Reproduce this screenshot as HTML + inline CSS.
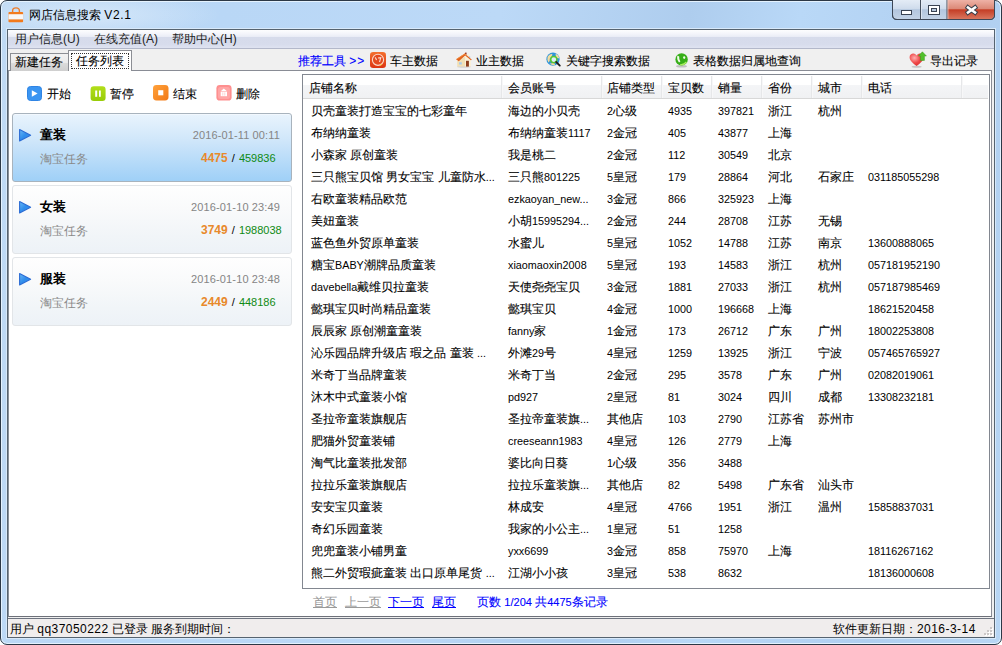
<!DOCTYPE html>
<html><head><meta charset="utf-8">
<style>
*{margin:0;padding:0;box-sizing:border-box}
html,body{width:1002px;height:645px;overflow:hidden;background:#fff}
body{font-family:"Liberation Sans",sans-serif;font-size:12px;color:#000;position:relative}
.a{position:absolute;white-space:nowrap}
#frame{left:0;top:0;width:1002px;height:645px;border:1px solid #2c3846;border-radius:7px;
 background:linear-gradient(100deg,#c0daf4 0%,#b9d7f6 20%,#bcd9f7 45%,#aecdee 62%,#b9d8f7 72%,#b0cff0 88%,#b8d6f4 100%);box-shadow:inset 0 0 0 1px #e4f2fe}
#client{left:7px;top:29px;width:988px;height:609px;background:#f0f0f0;border:1px solid #56636f;box-shadow:0 0 0 1px #d8e9fa}
#menubar{left:8px;top:30px;width:986px;height:19px;background:linear-gradient(180deg,#fdfdfe 0%,#f4f5fb 20%,#e9ecf6 38%,#d6dbeb 41%,#d7dcec 80%,#dfe3f1 100%);border-bottom:1px solid #b3b8ca}
.menu{top:31px;font-size:12px;line-height:16px;color:#1e1e1e}
#toolbar{left:8px;top:49px;width:986px;height:21px;background:#f0f0f0}
#panel{left:8px;top:70px;width:984px;height:547px;background:#fff;border-top:1px solid #898c95;border-left:1px solid #8a9098;border-right:1px solid #898c95;border-bottom:1px solid #6d7079}
#status{left:8px;top:618px;width:986px;height:19px;border-top:1px solid #6e7480;background:#f0eded}
.tb{top:53px;font-size:12px;line-height:16px;-webkit-text-stroke:0.1px currentColor}
.blue{color:#0000ff}
.card{left:12px;width:280px;height:69px;border-radius:3px}
.card1{background:linear-gradient(180deg,#e9f4fd 0%,#cfe6fa 40%,#9fd0f7 100%);border:1px solid #a8b3bd;box-shadow:inset 0 1px 0 #f2f8fe}
.card2{background:linear-gradient(180deg,#fefefe 0%,#f9fafb 35%,#f1f5f8 75%,#edf2f7 100%);border:1px solid #e2e5e8}
.tri{left:19px;width:0;height:0;border-top:6px solid transparent;border-bottom:6px solid transparent;border-left:12px solid #3d8fe0}
.ctitle{left:40px;font-weight:bold;font-size:13px;line-height:16px}
.csub{left:40px;top:0;color:#888;font-size:12px;line-height:16px;margin-top:1px}
.cdate{right:722px;color:#858585;font-size:11px;line-height:14px;letter-spacing:0.13px}
.ccount{left:201px;font-size:11px;line-height:14px;word-spacing:1px}
.or{color:#e8892b;font-weight:bold;font-size:12px}
.gr{color:#0f8a12}
#table{left:302px;top:74px;width:688px;height:515px;border:1px solid #828790;background:#fff}
.hdr{left:303px;top:75px;width:685px;height:24px;background:linear-gradient(180deg,#fff 0%,#fff 43.5%,#f4f5f7 44%,#f0f1f3 100%);border-bottom:1px solid #d8d8d8}
.hs{top:76px;width:1px;height:22px;background:#e6e7e9;box-shadow:1px 0 0 #f7f7f8}
.ht{top:81px;line-height:14px;font-size:12px;-webkit-text-stroke:0.1px #000}
#rows span{position:absolute;line-height:22px;font-size:12px;white-space:nowrap;-webkit-text-stroke:0.1px #000}
#rows i{font-style:normal;font-size:10.8px;-webkit-text-stroke:0}
.pg{top:594px;font-size:12px;line-height:16px;-webkit-text-stroke:0.1px currentColor}
.u{text-decoration:underline}
.ss{-webkit-text-stroke:0.1px currentColor}
.ls{font-style:normal;letter-spacing:0.45px}
.gry{color:#9a9a9a}
</style></head><body>
<div id="frame" class="a"></div>
<div class="a" style="left:1px;top:1px;width:260px;height:28px;background:radial-gradient(ellipse 130px 22px at 90px 14px,rgba(240,248,255,0.45),rgba(240,248,255,0))"></div>
<div id="client" class="a"></div>
<!-- title icon -->
<svg class="a" style="left:8px;top:7px" width="16" height="16" viewBox="0 0 16 16">
 <path d="M4.6 5.5 V3.8 Q4.6 0.9 8 0.9 Q11.4 0.9 11.4 3.8 V5.5" fill="none" stroke="#ee7d2a" stroke-width="1.4"/>
 <rect x="0.5" y="5" width="14.6" height="10.2" rx="0.8" fill="#f27a1c"/>
 <rect x="0.5" y="7.2" width="14.6" height="5.2" fill="#f8f6f4"/>
</svg>
<div class="a" style="left:29px;top:7px;font-size:12px;line-height:16px">网店信息搜索 <span style="letter-spacing:0.6px">V2.1</span></div>
<!-- window buttons -->
<svg class="a" style="left:892px;top:0" width="103" height="21" viewBox="0 0 103 21">
 <defs>
  <linearGradient id="gb" x1="0" y1="0" x2="0" y2="1"><stop offset="0" stop-color="#e4ecf6"/><stop offset="0.45" stop-color="#cfdcec"/><stop offset="0.5" stop-color="#b3c6de"/><stop offset="1" stop-color="#c3d3e6"/></linearGradient>
  <linearGradient id="gr" x1="0" y1="0" x2="0" y2="1"><stop offset="0" stop-color="#eeb2a6"/><stop offset="0.45" stop-color="#dc8a78"/><stop offset="0.52" stop-color="#c43e26"/><stop offset="1" stop-color="#d9765e"/></linearGradient>
 </defs>
 <path d="M0.5 0 V15 Q0.5 19.5 5 19.5 H98 Q102.5 19.5 102.5 15 V0" fill="url(#gb)" stroke="#3d4756" stroke-width="1"/>
 <path d="M55.5 0 V19 H97.5 Q102 19 102 14.5 V0Z" fill="url(#gr)"/>
 <path d="M102.5 0 V15 Q102.5 19.5 98 19.5 H5" fill="none" stroke="#3d4756" stroke-width="1"/>
 <path d="M0.5 0 V15 Q0.5 19.5 5 19.5" fill="none" stroke="#3d4756" stroke-width="1"/>
 <rect x="28" y="0" width="1" height="19" fill="#46505e"/><rect x="29" y="0" width="1" height="19" fill="#e8eef6" opacity="0.7"/>
 <rect x="54.5" y="0" width="1" height="19" fill="#46505e"/><rect x="55.5" y="0" width="1" height="19" fill="#f4c8bc" opacity="0.7"/>
 <rect x="9.5" y="10.5" width="10" height="4" fill="#fff" stroke="#3a4352" stroke-width="1"/>
 <rect x="36.5" y="5.5" width="11" height="9" fill="#fff" stroke="#3a4352" stroke-width="1"/>
 <rect x="39.5" y="8.5" width="5" height="3" fill="#b8c8dc" stroke="#3a4352" stroke-width="1"/>
 <path d="M76 7.5 L83 12.5 M83 7.5 L76 12.5" stroke="#3a3f4a" stroke-width="4.6" stroke-linecap="square"/>
 <path d="M76 7.5 L83 12.5 M83 7.5 L76 12.5" stroke="#fff" stroke-width="2.6" stroke-linecap="square"/>
</svg>
<div id="menubar" class="a"></div>
<div class="a menu" style="left:15px">用户信息(U)</div>
<div class="a menu" style="left:94px">在线充值(A)</div>
<div class="a menu" style="left:172px">帮助中心(H)</div>
<div id="toolbar" class="a"></div>
<div id="panel" class="a"></div>
<!-- tabs -->
<div class="a" style="left:10px;top:53px;width:59px;height:18px;border:1px solid #8c8e94;border-bottom:none;background:linear-gradient(180deg,#f2f2f2 0%,#ebebeb 50%,#dcdcdc 51%,#cfcfcf 100%)"></div>
<div class="a tab ss" style="left:15px;top:54px;line-height:16px">新建任务</div>
<div class="a" style="left:68px;top:50px;width:64px;height:21px;border:1px solid #8c8e94;border-bottom:none;background:#fff"></div>
<div class="a" style="left:71px;top:53px;width:58px;height:16px;border:1px dotted #333"></div>
<div class="a tab ss" style="left:76px;top:53px;line-height:16px">任务列表</div>
<!-- left toolbar -->
<svg class="a" style="left:27px;top:86px" width="15" height="15" viewBox="0 0 15 15"><rect x="0.5" y="0.5" width="14" height="14" rx="3" fill="#3a95f2" stroke="#2f84e4" stroke-width="1"/><path d="M4.8 4.2 L10.6 7.5 L4.8 10.8Z" fill="#fff"/></svg>
<div class="a ss" style="left:47px;top:86px;line-height:16px">开始</div>
<svg class="a" style="left:90px;top:86px" width="16" height="15" viewBox="0 0 16 15"><defs><linearGradient id="pg1" x1="0" y1="0" x2="0" y2="1"><stop offset="0" stop-color="#b2de1a"/><stop offset="1" stop-color="#98cc08"/></linearGradient></defs><rect x="0.6" y="0.3" width="15" height="14.6" rx="3.2" fill="url(#pg1)"/><rect x="5.2" y="4.5" width="2" height="6.3" fill="#fff"/><rect x="9" y="4.5" width="1.8" height="6.3" fill="#fff"/></svg>
<div class="a ss" style="left:110px;top:86px;line-height:16px">暂停</div>
<svg class="a" style="left:153px;top:85px" width="16" height="16" viewBox="0 0 16 16"><defs><linearGradient id="og1" x1="0" y1="0" x2="1" y2="1"><stop offset="0" stop-color="#ffa23c"/><stop offset="1" stop-color="#f27814"/></linearGradient></defs><rect x="0" y="0" width="15.5" height="15.5" rx="3.4" fill="url(#og1)"/><rect x="5.2" y="5.2" width="5.1" height="5.1" fill="#fff"/></svg>
<div class="a ss" style="left:173px;top:86px;line-height:16px">结束</div>
<svg class="a" style="left:216px;top:85px" width="16" height="16" viewBox="0 0 16 16"><rect x="0.4" y="0.1" width="15.2" height="15.5" rx="3.4" fill="#fe8f8f"/><rect x="2" y="2" width="12" height="12" rx="2.5" fill="#ffa6a6"/><path d="M4.7 6.2 L7.8 3.6 L11 6.2Z" fill="#fff"/><rect x="4.7" y="6.8" width="6.3" height="4.4" fill="#fff"/><path d="M6.8 7.4 V10.6 M8.8 7.4 V10.6" stroke="#ffc0c0" stroke-width="0.7"/></svg>
<div class="a ss" style="left:236px;top:86px;line-height:16px">删除</div>
<!-- cards -->
<div class="a card card1" style="top:113px"></div>
<svg class="a" style="left:19px;top:129px" width="13" height="13" viewBox="0 0 13 13"><defs><linearGradient id="tg0" x1="0" y1="0" x2="1" y2="1"><stop offset="0" stop-color="#6ab8f6"/><stop offset="0.5" stop-color="#2f8ceb"/><stop offset="1" stop-color="#3a9af0"/></linearGradient></defs><path d="M0.6 0.6 L11.6 6.3 L0.6 12Z" fill="url(#tg0)" stroke="#2c6cd4" stroke-width="1.1" stroke-linejoin="round"/></svg>
<div class="a ctitle" style="top:127px">童装</div>
<div class="a csub" style="top:150px">淘宝任务</div>
<div class="a cdate" style="top:128px">2016-01-11 00:11</div>
<div class="a ccount" style="top:151px"><span class="or">4475</span> / <span class="gr">459836</span></div>

<div class="a card card2" style="top:185px"></div>
<svg class="a" style="left:19px;top:201px" width="13" height="13" viewBox="0 0 13 13"><defs><linearGradient id="tg1" x1="0" y1="0" x2="1" y2="1"><stop offset="0" stop-color="#6ab8f6"/><stop offset="0.5" stop-color="#2f8ceb"/><stop offset="1" stop-color="#3a9af0"/></linearGradient></defs><path d="M0.6 0.6 L11.6 6.3 L0.6 12Z" fill="url(#tg1)" stroke="#2c6cd4" stroke-width="1.1" stroke-linejoin="round"/></svg>
<div class="a ctitle" style="top:199px">女装</div>
<div class="a csub" style="top:222px">淘宝任务</div>
<div class="a cdate" style="top:200px">2016-01-10 23:49</div>
<div class="a ccount" style="top:223px"><span class="or">3749</span> / <span class="gr">1988038</span></div>

<div class="a card card2" style="top:257px"></div>
<svg class="a" style="left:19px;top:273px" width="13" height="13" viewBox="0 0 13 13"><defs><linearGradient id="tg2" x1="0" y1="0" x2="1" y2="1"><stop offset="0" stop-color="#6ab8f6"/><stop offset="0.5" stop-color="#2f8ceb"/><stop offset="1" stop-color="#3a9af0"/></linearGradient></defs><path d="M0.6 0.6 L11.6 6.3 L0.6 12Z" fill="url(#tg2)" stroke="#2c6cd4" stroke-width="1.1" stroke-linejoin="round"/></svg>
<div class="a ctitle" style="top:271px">服装</div>
<div class="a csub" style="top:294px">淘宝任务</div>
<div class="a cdate" style="top:272px">2016-01-10 23:48</div>
<div class="a ccount" style="top:295px"><span class="or">2449</span> / <span class="gr">448186</span></div>

<!-- right toolbar -->
<div class="a tb blue" style="left:298px">推荐工具 <span style="letter-spacing:1px">&gt;&gt;</span></div>
<svg class="a" style="left:370px;top:52px" width="16" height="16" viewBox="0 0 16 16"><defs><linearGradient id="rg" x1="0" y1="0" x2="0" y2="1"><stop offset="0" stop-color="#f4702e"/><stop offset="1" stop-color="#dc3410"/></linearGradient></defs><rect x="0" y="0" width="16" height="16" rx="3.2" fill="url(#rg)"/><circle cx="8" cy="7.8" r="5.6" fill="#e44a1e" stroke="#fbd8c8" stroke-width="1.1"/><path d="M5 5.5 Q6 6 6.5 8.2 M8 6 L10.8 5.6 Q10 8 9.6 10" stroke="#fde0d0" stroke-width="1.1" fill="none"/><path d="M10 13 L12 12.5" stroke="#f8d040" stroke-width="1"/></svg>
<div class="a tb" style="left:390px">车主数据</div>
<svg class="a" style="left:456px;top:52px" width="16" height="16" viewBox="0 0 16 16"><ellipse cx="8" cy="14.8" rx="7" ry="1" fill="#000" opacity="0.12"/><path d="M1.2 8.8 L9.4 4.6 V14.6 H1.2Z" fill="#f2e0b4"/><path d="M9.2 3.8 L12.2 1.8 L14.9 6.6 V14.6 H9.2Z" fill="#fbf0d6"/><rect x="10" y="8.8" width="2.9" height="5.8" fill="#8c3e1c"/><rect x="3" y="10.3" width="2.8" height="2.2" fill="#a6cbee"/><rect x="12.6" y="4.4" width="1.6" height="1.6" fill="#a6cbee"/><rect x="9" y="0.6" width="1.6" height="2" fill="#9c3c24"/><path d="M0 7.3 L8.8 1.5 L15.9 7.7 L14.9 8.3 L9.2 3.6 L2.8 9.3Z" fill="#e2621c"/><path d="M0.6 7.2 L8.8 2 L10.5 3.4" stroke="#f59a48" stroke-width="0.7" fill="none"/></svg>
<div class="a tb" style="left:476px">业主数据</div>
<svg class="a" style="left:546px;top:52px" width="16" height="16" viewBox="0 0 16 16"><circle cx="7" cy="7.2" r="6.6" fill="#2e95dc"/><path d="M1.6 4.8 Q3.5 1.6 6.5 2.2 Q6 5 3.8 6.5 Q4.2 9 2.5 10.5 Q0.8 8 1.6 4.8Z" fill="#f5dc9c"/><path d="M9.5 1.4 Q12.6 2.8 13.4 6 Q11.5 6.8 10 5Z" fill="#f5dc9c"/><path d="M3.5 11.5 Q6 13.8 9.2 13.2 L8 10.8 Q5.5 11.8 3.5 11.5Z" fill="#f5dc9c"/><circle cx="7.8" cy="7.6" r="3.1" fill="#dceef8" stroke="#56c832" stroke-width="1.5"/><path d="M10.2 10 L13.8 13.6" stroke="#1e1e1e" stroke-width="1.8" stroke-linecap="round"/></svg>
<div class="a tb" style="left:566px">关键字搜索数据</div>
<svg class="a" style="left:674px;top:52px" width="16" height="16" viewBox="0 0 16 16"><ellipse cx="7.5" cy="14.2" rx="5.5" ry="1.3" fill="#888" opacity="0.45"/><circle cx="7.6" cy="7.4" r="6.2" fill="#36ae18"/><path d="M3.4 3.6 Q2.4 7.4 5 10.6 L6.4 9.6 Q4.8 7 5.2 4.4Z" fill="#f0fae8"/><ellipse cx="10.2" cy="5.6" rx="1.1" ry="1.4" fill="#f0fae8"/><path d="M6.2 12.6 Q9.8 13.2 12.4 10" stroke="#a8ec60" stroke-width="1.4" fill="none"/></svg>
<div class="a tb" style="left:693px">表格数据归属地查询</div>
<svg class="a" style="left:909px;top:51px" width="18" height="17" viewBox="0 0 18 17"><ellipse cx="7.6" cy="15.8" rx="5" ry="1" fill="#777" opacity="0.35"/><defs><radialGradient id="hg" cx="0.35" cy="0.35" r="0.8"><stop offset="0" stop-color="#ffb0b0"/><stop offset="0.5" stop-color="#f04848"/><stop offset="1" stop-color="#d02828"/></radialGradient></defs><path d="M7.6 15 C2.6 11 0.6 9 0.6 6.2 C0.6 3.8 2.4 2.6 4.4 2.6 C6 2.6 7 3.6 7.6 4.6 C8.2 3.6 9.2 2.6 10.8 2.6 C12.8 2.6 14.6 3.8 14.6 6.2 C14.6 9 12.6 11 7.6 15Z" fill="url(#hg)"/><path d="M13.4 0.8 L17.4 5 H15.4 V9.4 H11.4 V5 H9.4Z" fill="#52c02c" stroke="#3a9a1c" stroke-width="0.5"/></svg>
<div class="a tb" style="left:930px">导出记录</div>

<!-- table -->
<div id="table" class="a"></div>
<div class="a hdr"></div>
<div class="a hs" style="left:501px"></div>
<div class="a hs" style="left:601px"></div>
<div class="a hs" style="left:661px"></div>
<div class="a hs" style="left:711px"></div>
<div class="a hs" style="left:761px"></div>
<div class="a hs" style="left:811px"></div>
<div class="a hs" style="left:861px"></div>
<div class="a hs" style="left:961px"></div>
<div class="a ht" style="left:309px">店铺名称</div>
<div class="a ht" style="left:508px">会员账号</div>
<div class="a ht" style="left:607px">店铺类型</div>
<div class="a ht" style="left:668px">宝贝数</div>
<div class="a ht" style="left:718px">销量</div>
<div class="a ht" style="left:768px">省份</div>
<div class="a ht" style="left:818px">城市</div>
<div class="a ht" style="left:868px">电话</div>
<div id="rows">
<span style="left:311px;top:100px">贝壳童装打造宝宝的七彩童年</span><span style="left:508px;top:100px">海边的小贝壳</span><span style="left:607px;top:100px"><i>2</i>心级</span><span style="left:668px;top:100px"><i>4935</i></span><span style="left:718px;top:100px"><i>397821</i></span><span style="left:768px;top:100px">浙江</span><span style="left:818px;top:100px">杭州</span>
<span style="left:311px;top:122px">布纳纳童装</span><span style="left:508px;top:122px">布纳纳童装<i>1117</i></span><span style="left:607px;top:122px"><i>2</i>金冠</span><span style="left:668px;top:122px"><i>405</i></span><span style="left:718px;top:122px"><i>43877</i></span><span style="left:768px;top:122px">上海</span>
<span style="left:311px;top:144px">小森家 原创童装</span><span style="left:508px;top:144px">我是桃二</span><span style="left:607px;top:144px"><i>2</i>金冠</span><span style="left:668px;top:144px"><i>112</i></span><span style="left:718px;top:144px"><i>30549</i></span><span style="left:768px;top:144px">北京</span>
<span style="left:311px;top:166px">三只熊宝贝馆 男女宝宝 儿童防水<i>...</i></span><span style="left:508px;top:166px">三只熊<i>801225</i></span><span style="left:607px;top:166px"><i>5</i>皇冠</span><span style="left:668px;top:166px"><i>179</i></span><span style="left:718px;top:166px"><i>28864</i></span><span style="left:768px;top:166px">河北</span><span style="left:818px;top:166px">石家庄</span><span style="left:868px;top:166px"><i>031185055298</i></span>
<span style="left:311px;top:188px">右欧童装精品欧范</span><span style="left:508px;top:188px"><i>ezkaoyan_new...</i></span><span style="left:607px;top:188px"><i>3</i>金冠</span><span style="left:668px;top:188px"><i>866</i></span><span style="left:718px;top:188px"><i>325923</i></span><span style="left:768px;top:188px">上海</span>
<span style="left:311px;top:210px">美妞童装</span><span style="left:508px;top:210px">小胡<i>15995294...</i></span><span style="left:607px;top:210px"><i>2</i>金冠</span><span style="left:668px;top:210px"><i>244</i></span><span style="left:718px;top:210px"><i>28708</i></span><span style="left:768px;top:210px">江苏</span><span style="left:818px;top:210px">无锡</span>
<span style="left:311px;top:232px">蓝色鱼外贸原单童装</span><span style="left:508px;top:232px">水蜜儿</span><span style="left:607px;top:232px"><i>5</i>皇冠</span><span style="left:668px;top:232px"><i>1052</i></span><span style="left:718px;top:232px"><i>14788</i></span><span style="left:768px;top:232px">江苏</span><span style="left:818px;top:232px">南京</span><span style="left:868px;top:232px"><i>13600888065</i></span>
<span style="left:311px;top:254px">糖宝<i>BABY</i>潮牌品质童装</span><span style="left:508px;top:254px"><i>xiaomaoxin2008</i></span><span style="left:607px;top:254px"><i>5</i>皇冠</span><span style="left:668px;top:254px"><i>193</i></span><span style="left:718px;top:254px"><i>14583</i></span><span style="left:768px;top:254px">浙江</span><span style="left:818px;top:254px">杭州</span><span style="left:868px;top:254px"><i>057181952190</i></span>
<span style="left:311px;top:276px"><i>davebella</i>戴维贝拉童装</span><span style="left:508px;top:276px">天使尧尧宝贝</span><span style="left:607px;top:276px"><i>3</i>金冠</span><span style="left:668px;top:276px"><i>1881</i></span><span style="left:718px;top:276px"><i>27033</i></span><span style="left:768px;top:276px">浙江</span><span style="left:818px;top:276px">杭州</span><span style="left:868px;top:276px"><i>057187985469</i></span>
<span style="left:311px;top:298px">懿琪宝贝时尚精品童装</span><span style="left:508px;top:298px">懿琪宝贝</span><span style="left:607px;top:298px"><i>4</i>金冠</span><span style="left:668px;top:298px"><i>1000</i></span><span style="left:718px;top:298px"><i>196668</i></span><span style="left:768px;top:298px">上海</span><span style="left:868px;top:298px"><i>18621520458</i></span>
<span style="left:311px;top:320px">辰辰家 原创潮童童装</span><span style="left:508px;top:320px"><i>fanny</i>家</span><span style="left:607px;top:320px"><i>1</i>金冠</span><span style="left:668px;top:320px"><i>173</i></span><span style="left:718px;top:320px"><i>26712</i></span><span style="left:768px;top:320px">广东</span><span style="left:818px;top:320px">广州</span><span style="left:868px;top:320px"><i>18002253808</i></span>
<span style="left:311px;top:342px">沁乐园品牌升级店  瑕之品 童装 <i>...</i></span><span style="left:508px;top:342px">外滩<i>29</i>号</span><span style="left:607px;top:342px"><i>4</i>皇冠</span><span style="left:668px;top:342px"><i>1259</i></span><span style="left:718px;top:342px"><i>13925</i></span><span style="left:768px;top:342px">浙江</span><span style="left:818px;top:342px">宁波</span><span style="left:868px;top:342px"><i>057465765927</i></span>
<span style="left:311px;top:364px">米奇丁当品牌童装</span><span style="left:508px;top:364px">米奇丁当</span><span style="left:607px;top:364px"><i>2</i>金冠</span><span style="left:668px;top:364px"><i>295</i></span><span style="left:718px;top:364px"><i>3578</i></span><span style="left:768px;top:364px">广东</span><span style="left:818px;top:364px">广州</span><span style="left:868px;top:364px"><i>02082019061</i></span>
<span style="left:311px;top:386px">沐木中式童装小馆</span><span style="left:508px;top:386px"><i>pd927</i></span><span style="left:607px;top:386px"><i>2</i>皇冠</span><span style="left:668px;top:386px"><i>81</i></span><span style="left:718px;top:386px"><i>3024</i></span><span style="left:768px;top:386px">四川</span><span style="left:818px;top:386px">成都</span><span style="left:868px;top:386px"><i>13308232181</i></span>
<span style="left:311px;top:408px">圣拉帝童装旗舰店</span><span style="left:508px;top:408px">圣拉帝童装旗<i>...</i></span><span style="left:607px;top:408px">其他店</span><span style="left:668px;top:408px"><i>103</i></span><span style="left:718px;top:408px"><i>2790</i></span><span style="left:768px;top:408px">江苏省</span><span style="left:818px;top:408px">苏州市</span>
<span style="left:311px;top:430px">肥猫外贸童装铺</span><span style="left:508px;top:430px"><i>creeseann1983</i></span><span style="left:607px;top:430px"><i>4</i>皇冠</span><span style="left:668px;top:430px"><i>126</i></span><span style="left:718px;top:430px"><i>2779</i></span><span style="left:768px;top:430px">上海</span>
<span style="left:311px;top:452px">淘气比童装批发部</span><span style="left:508px;top:452px">婆比向日葵</span><span style="left:607px;top:452px"><i>1</i>心级</span><span style="left:668px;top:452px"><i>356</i></span><span style="left:718px;top:452px"><i>3488</i></span>
<span style="left:311px;top:474px">拉拉乐童装旗舰店</span><span style="left:508px;top:474px">拉拉乐童装旗<i>...</i></span><span style="left:607px;top:474px">其他店</span><span style="left:668px;top:474px"><i>82</i></span><span style="left:718px;top:474px"><i>5498</i></span><span style="left:768px;top:474px">广东省</span><span style="left:818px;top:474px">汕头市</span>
<span style="left:311px;top:496px">安安宝贝童装</span><span style="left:508px;top:496px">林成安</span><span style="left:607px;top:496px"><i>4</i>皇冠</span><span style="left:668px;top:496px"><i>4766</i></span><span style="left:718px;top:496px"><i>1951</i></span><span style="left:768px;top:496px">浙江</span><span style="left:818px;top:496px">温州</span><span style="left:868px;top:496px"><i>15858837031</i></span>
<span style="left:311px;top:518px">奇幻乐园童装</span><span style="left:508px;top:518px">我家的小公主<i>...</i></span><span style="left:607px;top:518px"><i>1</i>皇冠</span><span style="left:668px;top:518px"><i>51</i></span><span style="left:718px;top:518px"><i>1258</i></span>
<span style="left:311px;top:540px">兜兜童装小铺男童</span><span style="left:508px;top:540px"><i>yxx6699</i></span><span style="left:607px;top:540px"><i>3</i>金冠</span><span style="left:668px;top:540px"><i>858</i></span><span style="left:718px;top:540px"><i>75970</i></span><span style="left:768px;top:540px">上海</span><span style="left:868px;top:540px"><i>18116267162</i></span>
<span style="left:311px;top:562px">熊二外贸瑕疵童装 出口原单尾货 <i>...</i></span><span style="left:508px;top:562px">江湖小小孩</span><span style="left:607px;top:562px"><i>3</i>皇冠</span><span style="left:668px;top:562px"><i>538</i></span><span style="left:718px;top:562px"><i>8632</i></span><span style="left:868px;top:562px"><i>18136000608</i></span>
</div>
<!-- pagination -->
<div class="a pg gry u" style="left:313px">首页</div>
<div class="a pg gry u" style="left:345px">上一页</div>
<div class="a pg blue u" style="left:388px">下一页</div>
<div class="a pg blue u" style="left:432px">尾页</div>
<div class="a pg blue" style="left:477px">页数 <i style="font-style:normal;font-size:11px">1/204</i> 共<i style="font-style:normal;font-size:11px">4475</i>条记录</div>

<div id="status" class="a"></div>
<div class="a" style="left:10px;top:621px;line-height:16px">用户 <i class="ls">qq37050222</i> 已登录 服务到期时间：</div>
<div class="a" style="left:833px;top:621px;line-height:16px">软件更新日期：<i class="ls">2016-3-14</i></div>
<svg class="a" style="left:982px;top:627px" width="12" height="12" viewBox="0 0 12 12">
<g fill="#fff"><rect x="9" y="1" width="2" height="2"/><rect x="6" y="4" width="2" height="2"/><rect x="9" y="4" width="2" height="2"/><rect x="3" y="7" width="2" height="2"/><rect x="6" y="7" width="2" height="2"/><rect x="9" y="7" width="2" height="2"/></g>
<g fill="#cbc7c7"><rect x="8" y="0" width="2" height="2"/><rect x="5" y="3" width="2" height="2"/><rect x="8" y="3" width="2" height="2"/><rect x="2" y="6" width="2" height="2"/><rect x="5" y="6" width="2" height="2"/><rect x="8" y="6" width="2" height="2"/></g>
</svg>
</body></html>
